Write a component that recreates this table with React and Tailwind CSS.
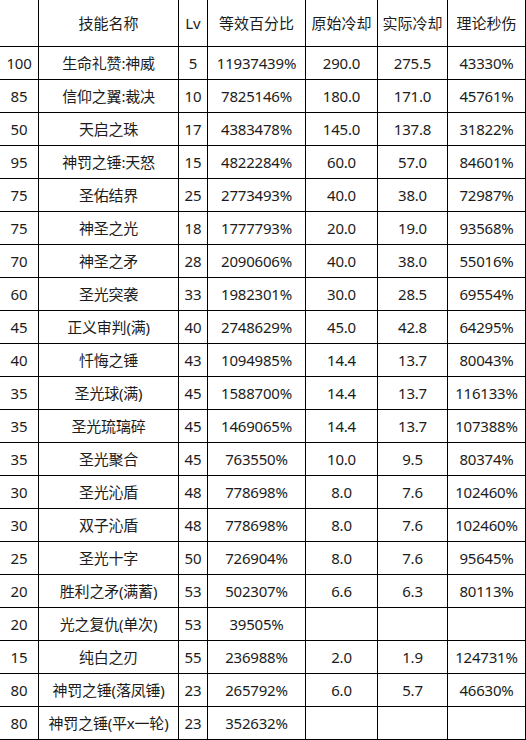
import React from "react";

const header = ["", "技能名称", "Lv", "等效百分比", "原始冷却", "实际冷却", "理论秒伤"];

const rows = [
  ["100", "生命礼赞:神威", "5", "11937439%", "290.0", "275.5", "43330%"],
  ["85", "信仰之翼:裁决", "10", "7825146%", "180.0", "171.0", "45761%"],
  ["50", "天启之珠", "17", "4383478%", "145.0", "137.8", "31822%"],
  ["95", "神罚之锤:天怒", "15", "4822284%", "60.0", "57.0", "84601%"],
  ["75", "圣佑结界", "25", "2773493%", "40.0", "38.0", "72987%"],
  ["75", "神圣之光", "18", "1777793%", "20.0", "19.0", "93568%"],
  ["70", "神圣之矛", "28", "2090606%", "40.0", "38.0", "55016%"],
  ["60", "圣光突袭", "33", "1982301%", "30.0", "28.5", "69554%"],
  ["45", "正义审判(满)", "40", "2748629%", "45.0", "42.8", "64295%"],
  ["40", "忏悔之锤", "43", "1094985%", "14.4", "13.7", "80043%"],
  ["35", "圣光球(满)", "45", "1588700%", "14.4", "13.7", "116133%"],
  ["35", "圣光琉璃碎", "45", "1469065%", "14.4", "13.7", "107388%"],
  ["35", "圣光聚合", "45", "763550%", "10.0", "9.5", "80374%"],
  ["30", "圣光沁盾", "48", "778698%", "8.0", "7.6", "102460%"],
  ["30", "双子沁盾", "48", "778698%", "8.0", "7.6", "102460%"],
  ["25", "圣光十字", "50", "726904%", "8.0", "7.6", "95645%"],
  ["20", "胜利之矛(满蓄)", "53", "502307%", "6.6", "6.3", "80113%"],
  ["20", "光之复仇(单次)", "53", "39505%", "", "", ""],
  ["15", "纯白之刃", "55", "236988%", "2.0", "1.9", "124731%"],
  ["80", "神罚之锤(落凤锤)", "23", "265792%", "6.0", "5.7", "46630%"],
  ["80", "神罚之锤(平x一轮)", "23", "352632%", "", "", ""],
];

export default function App() {
  return (
    <div
      className="w-[526px] h-[740px] bg-black pr-px pb-px text-[15px] text-[#1c1c1c] leading-none"
      style={{ fontFamily: '"Noto Sans", "Noto Sans CJK SC", sans-serif' }}
    >
      <div className="grid grid-cols-[38px_139px_28px_97px_71px_69px_77px] grid-rows-[46px_repeat(21,32px)] gap-px">
        {header.map((h, i) => (
          <div key={"h" + i} className="bg-white flex items-center justify-center whitespace-nowrap">
            {h}
          </div>
        ))}
        {rows.map((r, ri) =>
          r.map((c, ci) => (
            <div
              key={ri + "-" + ci}
              className="bg-white flex items-center justify-center whitespace-nowrap tracking-[-0.2px]"
            >
              {c}
            </div>
          ))
        )}
      </div>
    </div>
  );
}
